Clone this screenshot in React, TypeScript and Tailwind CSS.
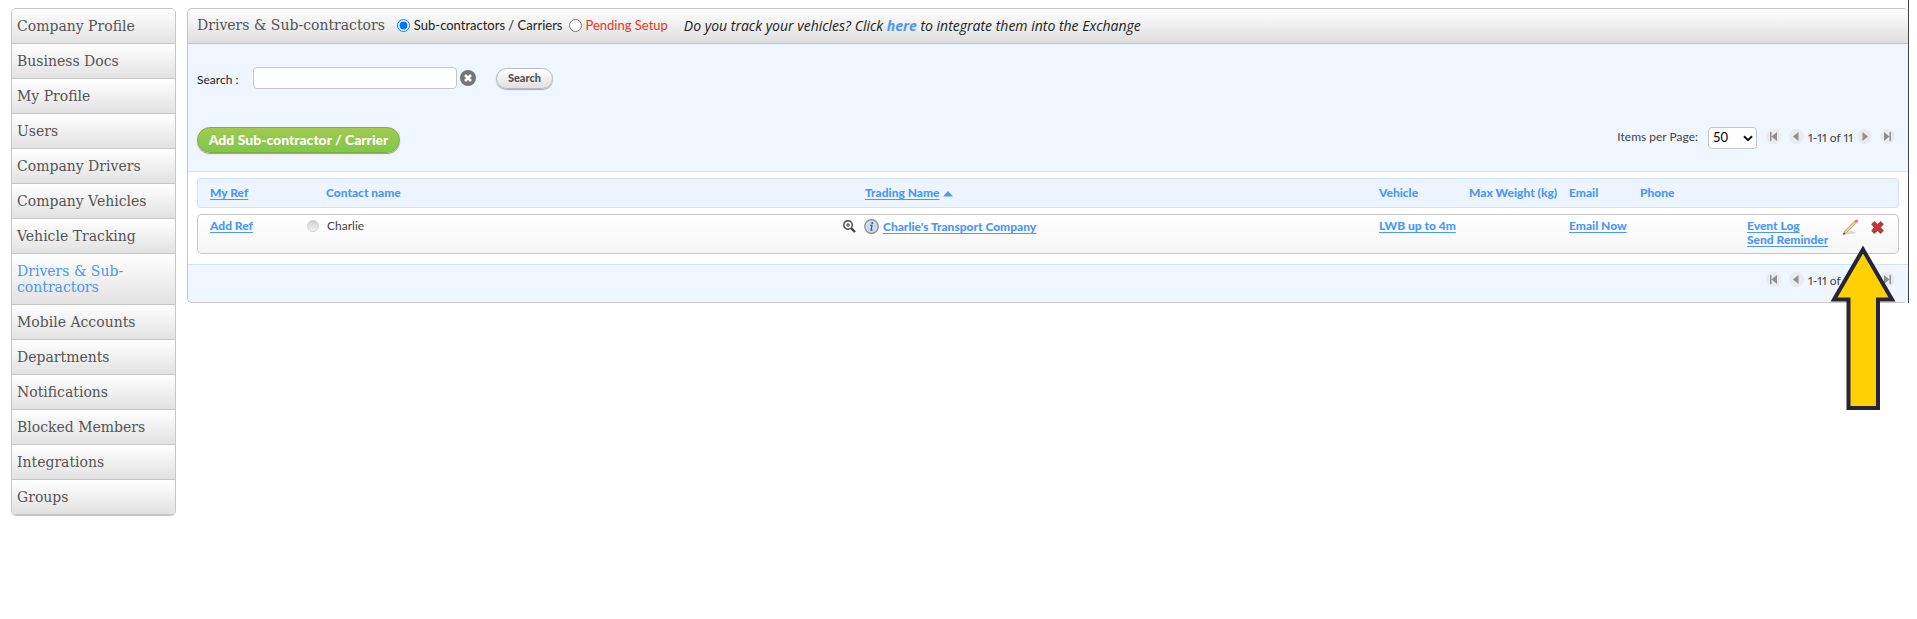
import { useState } from 'react';

interface MenuItem {
  label: string;
  active?: boolean;
}

interface Contractor {
  name: string;
  company: string;
  vehicle: string;
}

const MENU: MenuItem[] = [
  { label: 'Company Profile' },
  { label: 'Business Docs' },
  { label: 'My Profile' },
  { label: 'Users' },
  { label: 'Company Drivers' },
  { label: 'Company Vehicles' },
  { label: 'Vehicle Tracking' },
  { label: 'Drivers & Sub-contractors', active: true },
  { label: 'Mobile Accounts' },
  { label: 'Departments' },
  { label: 'Notifications' },
  { label: 'Blocked Members' },
  { label: 'Integrations' },
  { label: 'Groups' },
];

const CONTRACTORS: Contractor[] = [
  { name: 'Charlie', company: "Charlie's Transport Company", vehicle: 'LWB up to 4m' },
];

const PAGER_SHAPES = {
  First: 'M4 3v9h1.5V3zM11 3v9L5.5 7.5z',
  Previous: 'M9.5 3v9L4 7.5z',
  Next: 'M5.5 3v9L11 7.5z',
  Last: 'M11 3v9H9.5V3zM4 3v9l5.5-4.5z',
};

const PagerButton = ({ kind }: { kind: keyof typeof PAGER_SHAPES }) => (
  <button aria-label={`${kind} page`} className="size-[15px] rounded-full bg-[#e9ebed]">
    <svg width="15" height="15" viewBox="0 0 15 15" fill="#8f8f8f">
      <path d={PAGER_SHAPES[kind]} />
    </svg>
  </button>
);

const Pager = () => (
  <div className="flex items-start">
    <div className="flex gap-2">
      <PagerButton kind="First" />
      <PagerButton kind="Previous" />
    </div>
    <span className="flex w-[53px] justify-center text-xs leading-[18px] whitespace-nowrap text-[#444] proportional-nums">
      1-11 of 11
    </span>
    <div className="flex gap-2">
      <PagerButton kind="Next" />
      <PagerButton kind="Last" />
    </div>
  </div>
);

const Sidebar = () => (
  <nav className="w-[165px] shrink-0 overflow-hidden rounded-[5px] border border-[#c6c6c6] font-['DejaVu_Serif',serif]">
    {MENU.map(item => (
      <a
        key={item.label}
        href="#"
        className={`block border-b border-[#c6c6c6] bg-linear-to-b from-white to-[#e2e2e2] py-[9px] pl-[5px] pr-4 text-sm leading-4 ${
          item.active ? 'text-[#4a98f7]' : 'text-[#555]'
        }`}
      >
        {item.label}
      </a>
    ))}
  </nav>
);

const ZoomIcon = () => (
  <svg width="13" height="13" viewBox="0 0 13 13" fill="none" stroke="#444">
    <circle cx="5" cy="5" r="4.2" strokeWidth="1.4" />
    <path d="M3 5h4M5 3v4" strokeWidth="1.1" />
    <path d="M8.2 8.2l3.8 3.8" strokeWidth="2.4" />
  </svg>
);

const InfoIcon = () => (
  <svg width="15" height="15" viewBox="0 0 15 15">
    <circle cx="7.5" cy="7.5" r="6.8" fill="#c9daf2" stroke="#868a90" strokeWidth="1.2" />
    <circle cx="8.2" cy="3.9" r="1" fill="#4a5468" />
    <path d="M6.2 6.3h1.8L7 11.2h1.5" fill="none" stroke="#4a5468" strokeWidth="1.2" />
  </svg>
);

const PencilIcon = () => (
  <svg width="16" height="16" viewBox="0 0 16 16">
    <path d="M2 15.4L13.5 14.2 8 11.5z" fill="#d5d5d5" />
    <path d="M1.6 12.2L11.6 2l1.8 1.7L3.6 13.8.8 15z" fill="#e6d684" stroke="#a4935a" strokeWidth=".7" />
    <path d="M11.4 2.2L13 .6c.8-.5 2.5.8 2 1.9l-1.4 1.6z" fill="#e77870" />
    <path d="M0 15.8l.9-2.2 1.5 1.3z" fill="#222" />
  </svg>
);

const DeleteIcon = () => (
  <svg width="13" height="13" viewBox="0 0 13 13">
    <path
      d="M3.2.6L6.5 3.4 9.8.6l2.6 2.6-2.9 3.3 2.9 3.3-2.6 2.6-3.3-2.8-3.3 2.8L.6 9.8l2.900-3.300L.6 3.2z"
      fill="#c6382f"
      stroke="#9d3a33"
      strokeWidth=".8"
    />
  </svg>
);

const StatusDot = () => (
  <span className="size-3 rounded-full border border-[#d0d0d0] bg-linear-to-b from-[#cfcfcf] to-[#f2f2f2]" />
);

const linkClass = 'font-black text-[#4a98f7] underline underline-offset-2';
const headClass = 'border-y border-[#cfe4f9] p-0 font-black';
const cellClass = 'border-y border-[#c6c6c6] bg-linear-to-b from-white to-[#f6f6f6] p-0 pt-1 align-top';

const ContractorTable = () => (
  <table className="w-full table-fixed border-separate border-spacing-x-0 border-spacing-y-1.5 text-left text-xs leading-[14px]">
    <colgroup>
      <col className="w-[110px]" />
      <col />
      <col />
      <col className="w-[90px]" />
      <col className="w-[100px]" />
      <col className="w-[71px]" />
      <col className="w-[107px]" />
      <col className="w-24" />
      <col className="w-14" />
    </colgroup>
    <thead>
      <tr className="h-[30px] bg-[#ecf5ff] text-[#4a98f7]">
        <th className={`${headClass} rounded-l border-l pl-3`}>
          <a href="#" className={linkClass}>My Ref</a>
        </th>
        <th className={`${headClass} pl-[19px]`}>Contact name</th>
        <th className={`${headClass} pl-[22px]`}>
          <a href="#" className={linkClass}>Trading Name</a>
          <svg className="ml-[3px] inline-block" width="10" height="6" viewBox="0 0 10 6" fill="#4a98f7">
            <path d="M5 0l5 5.5H0z" />
          </svg>
        </th>
        <th className={headClass}>Vehicle</th>
        <th className={`${headClass} whitespace-nowrap`}>Max Weight (kg)</th>
        <th className={headClass}>Email</th>
        <th className={headClass}>Phone</th>
        <th className={headClass} />
        <th className={`${headClass} rounded-r border-r`} />
      </tr>
    </thead>
    <tbody>
      {CONTRACTORS.map(c => (
        <tr key={c.name} className="h-10 text-[#444]">
          <td className={`${cellClass} rounded-l-[5px] border-l pl-3`}>
            <a href="#" className={linkClass}>Add Ref</a>
          </td>
          <td className={cellClass}>
            <div className="flex items-center gap-2">
              <StatusDot />
              {c.name}
            </div>
          </td>
          <td className={cellClass}>
            <div className="flex items-center">
              <button aria-label="View" className="mr-2"><ZoomIcon /></button>
              <button aria-label="Info" className="mr-1"><InfoIcon /></button>
              <a href="#" className={linkClass}>{c.company}</a>
            </div>
          </td>
          <td className={`${cellClass} whitespace-nowrap`}>
            <a href="#" className={linkClass}>{c.vehicle}</a>
          </td>
          <td className={cellClass} />
          <td className={`${cellClass} whitespace-nowrap`}>
            <a href="#" className={linkClass}>Email Now</a>
          </td>
          <td className={cellClass} />
          <td className={`${cellClass} whitespace-nowrap`}>
            <a href="#" className={`${linkClass} block`}>Event Log</a>
            <a href="#" className={`${linkClass} block`}>Send Reminder</a>
          </td>
          <td className={`${cellClass} rounded-r-[5px] border-r`}>
            <div className="flex items-center gap-3">
              <button aria-label="Edit"><PencilIcon /></button>
              <button aria-label="Delete"><DeleteIcon /></button>
            </div>
          </td>
        </tr>
      ))}
    </tbody>
  </table>
);

export default function App() {
  const [view, setView] = useState('carriers');
  const [search, setSearch] = useState('');

  return (
    <div className="flex items-start gap-[11px] bg-white pl-[11px] pr-2 font-['Lato',sans-serif] text-xs text-[#222]">
      <div className="shrink-0 pt-2">
        <Sidebar />
      </div>

      <main className="relative min-w-0 flex-1 border-r border-[#444] pt-2">
        <section className="rounded-[5px] border border-r-0 border-[#c6c6c6]">
          <header className="flex h-[35px] items-center rounded-t-[5px] border-b border-[#c6c6c6] bg-linear-to-b from-white to-[#dedede] pl-[9px]">
            <h1 className="pb-0.5 font-['DejaVu_Serif',serif] text-sm text-[#555]">
              Drivers &amp; Sub-contractors
            </h1>
            <label className="ml-3 flex items-center gap-1 text-[13px]">
              <input
                type="radio"
                name="view"
                className="size-[13px]"
                checked={view === 'carriers'}
                onChange={() => setView('carriers')}
              />
              Sub-contractors / Carriers
            </label>
            <label className="ml-1.5 flex items-center gap-1 text-[13px] text-[#ee3322]">
              <input
                type="radio"
                name="view"
                className="size-[13px]"
                checked={view === 'pending'}
                onChange={() => setView('pending')}
              />
              Pending Setup
            </label>
            <p className="ml-4 font-['Open_Sans',sans-serif] text-sm italic">
              Do you track your vehicles? Click <a href="#" className="font-bold text-[#4a98f7]">here</a> to integrate them into the Exchange
            </p>
          </header>

          <div className="border-b border-[#cfe4f9] bg-[#eff6ff] pt-[23px] pb-[18px] pl-[9px] pr-[13px]">
            <form className="flex items-center" onSubmit={e => e.preventDefault()}>
              <label htmlFor="search" className="w-14 pt-1">Search :</label>
              <input
                id="search"
                value={search}
                onChange={e => setSearch(e.target.value)}
                className="h-[22px] w-[204px] rounded border border-[#c6c6c6] bg-white px-1 outline-none"
              />
              <button type="button" aria-label="Clear" className="ml-[3px]" onClick={() => setSearch('')}>
                <svg width="16" height="16" viewBox="0 0 16 16">
                  <circle cx="8" cy="8" r="8" fill="#757575" />
                  <path d="M5 5l6 6M11 5l-6 6" stroke="#fff" strokeWidth="2.6" />
                </svg>
              </button>
              <button className="ml-5 h-[21px] w-[57px] rounded-full border border-[#bbb] bg-linear-to-b from-white to-[#e0e0e0] text-[11px] font-black text-[#555] shadow-[0_1px_1px_#aaa]">
                Search
              </button>
            </form>

            <div className="mt-[38px] flex items-start justify-between">
              <button className="h-[26px] w-[203px] rounded-full border border-[#7fae3c] bg-linear-to-b from-[#a0ca50] to-[#82c64a] text-sm leading-6 font-black text-white shadow-[0_1px_1px_#999]">
                Add Sub-contractor / Carrier
              </button>
              <div className="flex items-start">
                <label htmlFor="per-page" className="mr-2.5 pt-0.5 text-[#444]">Items per Page:</label>
                <div className="relative mr-[9px]">
                  <select
                    id="per-page"
                    defaultValue="50"
                    className="h-[22px] w-[49px] appearance-none rounded border border-[#c6c6c6] bg-white pl-1 text-[13px] text-black"
                  >
                    <option>25</option>
                    <option>50</option>
                    <option>100</option>
                  </select>
                  <svg className="pointer-events-none absolute right-1 top-2" width="10" height="7" viewBox="0 0 10 7" fill="none" stroke="#111" strokeWidth="2">
                    <path d="M1 1.2l4 4 4-4" />
                  </svg>
                </div>
                <div className="pt-0.5">
                  <Pager />
                </div>
              </div>
            </div>
          </div>

          <div className="bg-white pl-[9px] pr-[9px] pb-1">
            <ContractorTable />
          </div>

          <footer className="flex h-[38px] items-start justify-end rounded-bl-[5px] border-t border-[#cfe4f9] bg-[#eff6ff] pr-[13px] pt-[7px]">
            <Pager />
          </footer>
        </section>

        <svg
          className="pointer-events-none absolute right-3 top-[243px]"
          width="66"
          height="169"
          viewBox="0 0 66 169"
          fill="#ffd002"
          stroke="#262538"
          strokeWidth="4"
        >
          <path d="M33 6.5L4 56.5h14.500v108.500h29.500v-108.500h14z" />
        </svg>
      </main>
    </div>
  );
}
